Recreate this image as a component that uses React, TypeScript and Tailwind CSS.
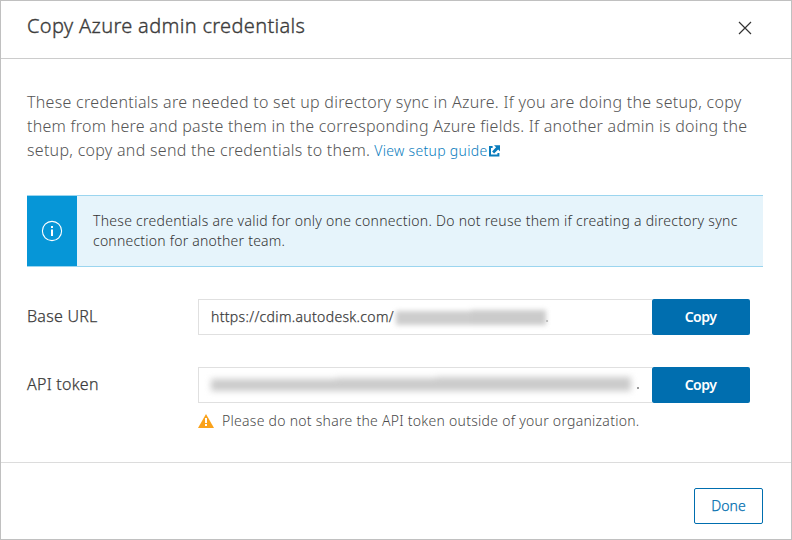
function ExternalLinkIcon() {
  return (
    <svg width="12" height="12" viewBox="0 0 12 12" className="mb-px ml-px shrink-0" aria-hidden="true">
      <path d="M4.6 2H2v8.4h8.4V8" fill="none" stroke="#0a7cbd" strokeWidth="2" />
      <path d="M6 .2h6v6l-1.9-1.8-4 4-2-2 4-4.1z" fill="#0a7cbd" />
    </svg>
  );
}

function InfoIcon() {
  return (
    <svg width="22" height="22" viewBox="0 0 22 22" aria-hidden="true">
      <circle cx="11" cy="11" r="9.6" fill="none" stroke="#fff" strokeWidth="1.1" />
      <rect x="10" y="6" width="2" height="2" fill="#fff" />
      <rect x="10" y="9.5" width="2" height="6.5" fill="#fff" />
    </svg>
  );
}

function WarningIcon() {
  return (
    <svg width="16" height="14" viewBox="0 0 16 14" aria-hidden="true">
      <path d="M8 0l8 14H0z" fill="#faa21b" />
      <rect x="7" y="4" width="2" height="5" fill="#fff" />
      <rect x="7" y="10" width="2" height="2" fill="#fff" />
    </svg>
  );
}

function CloseIcon() {
  return (
    <svg width="14" height="14" viewBox="0 0 14 14" aria-hidden="true">
      <path d="M1 1l12 12M13 1L1 13" stroke="#333" strokeWidth="1.2" />
    </svg>
  );
}

function CopyButton() {
  return (
    <button className="h-9 w-[98px] rounded-[2px] bg-[#006eaf] pr-px text-sm font-semibold tracking-[-0.5px] text-white">
      Copy
    </button>
  );
}

export default function App() {
  return (
    <div className="flex h-[540px] w-[792px] flex-col overflow-hidden border border-[#c0c0c0] bg-white font-['Noto_Sans',sans-serif] font-light text-[#4a4a4a]">
      <header className="flex h-[58px] shrink-0 items-start justify-between border-b border-[#ccc] pr-[39px] pl-[26px]">
        <h1 className="pt-[11px] text-xl leading-[28px] tracking-[0.33px] whitespace-nowrap text-[#3c3c3c] [-webkit-text-stroke:0.35px_#3c3c3c]">
          Copy Azure admin credentials
        </h1>
        <button className="mt-5" aria-label="Close">
          <CloseIcon />
        </button>
      </header>

      <main className="flex h-[404px] shrink-0 flex-col border-b border-[#dcdcdc] px-[26px] pt-[31px]">
        <div className="text-base leading-[24px] whitespace-nowrap text-[#555]">
          <p className="tracking-[0.29px]">These credentials are needed to set up directory sync in Azure. If you are doing the setup, copy</p>
          <p className="tracking-[0.26px]">them from here and paste them in the corresponding Azure fields. If another admin is doing the</p>
          <div className="flex h-6 items-start">
            <p className="tracking-[0.28px]">setup, copy and send the credentials to them.</p>
            <a className="mt-px ml-1 flex items-center text-sm leading-[24px] tracking-[0.3px] text-[#0a7cbd]">
              View setup guide
              <ExternalLinkIcon />
            </a>
          </div>
        </div>

        <div className="mt-[33px] flex h-[72px] w-[736px] shrink-0 border-y border-[#9bd5ef] bg-[#e6f4fb]">
          <div className="flex w-[50px] items-center justify-center bg-[#0696d7]">
            <InfoIcon />
          </div>
          <div className="flex flex-col justify-center pl-4 text-sm leading-[20px] whitespace-nowrap text-[#333]">
            <p className="tracking-[0.27px]">These credentials are valid for only one connection. Do not reuse them if creating a directory sync</p>
            <p className="tracking-[0.22px]">connection for another team.</p>
          </div>
        </div>

        <div className="mt-8 flex h-9 shrink-0 items-center">
          <label className="w-[171px] pb-[2px] text-base tracking-[0.25px] text-[#3c3c3c] [-webkit-text-stroke:0.25px_#3c3c3c]">Base URL</label>
          <div className="flex h-9 w-[454px] items-center border border-r-0 border-[#e0e0e0] pl-3 text-sm text-[#3c3c3c]">
            <span className="tracking-[0.33px] [-webkit-text-stroke:0.25px_#3c3c3c]">https://cdim.autodesk.com/</span>
            <span className="ml-0.5 flex h-4 w-[150px] items-end blur-[2.5px]">
              <span className="h-[14px] flex-1 bg-[#cdcdcd]" />
              <span className="h-[15px] flex-1 bg-[#cbcbcb]" />
            </span>
            <span className="mt-2 size-[2px] bg-[#bbb]" />
          </div>
          <CopyButton />
        </div>

        <div className="mt-8 flex h-9 shrink-0 items-center">
          <label className="w-[171px] pb-[2px] text-base tracking-[0.25px] text-[#3c3c3c] [-webkit-text-stroke:0.25px_#3c3c3c]">API token</label>
          <div className="flex h-9 w-[454px] items-center border border-r-0 border-[#e0e0e0] pl-3">
            <span className="mb-0.5 flex h-[14px] w-[420px] items-end blur-[3px]">
              <span className="h-[12px] w-[125px] bg-[#cbcbcb]" />
              <span className="h-[13px] w-[100px] bg-[#cbcbcb]" />
              <span className="h-[14px] flex-1 bg-[#cbcbcb]" />
            </span>
            <span className="mt-1.5 ml-1.5 size-[2px] bg-[#999]" />
          </div>
          <CopyButton />
        </div>

        <div className="mt-2 ml-[171px] flex items-center gap-2 text-sm leading-[20px] tracking-[0.27px] whitespace-nowrap text-[#4a4a4a]">
          <WarningIcon />
          <p>Please do not share the API token outside of your organization.</p>
        </div>
      </main>

      <footer className="flex justify-end pt-[25px] pr-[28px]">
        <button className="h-9 w-[69px] rounded-[2px] border border-[#006eaf] text-sm text-[#006eaf] [-webkit-text-stroke:0.25px_#006eaf]">
          Done
        </button>
      </footer>
    </div>
  );
}
